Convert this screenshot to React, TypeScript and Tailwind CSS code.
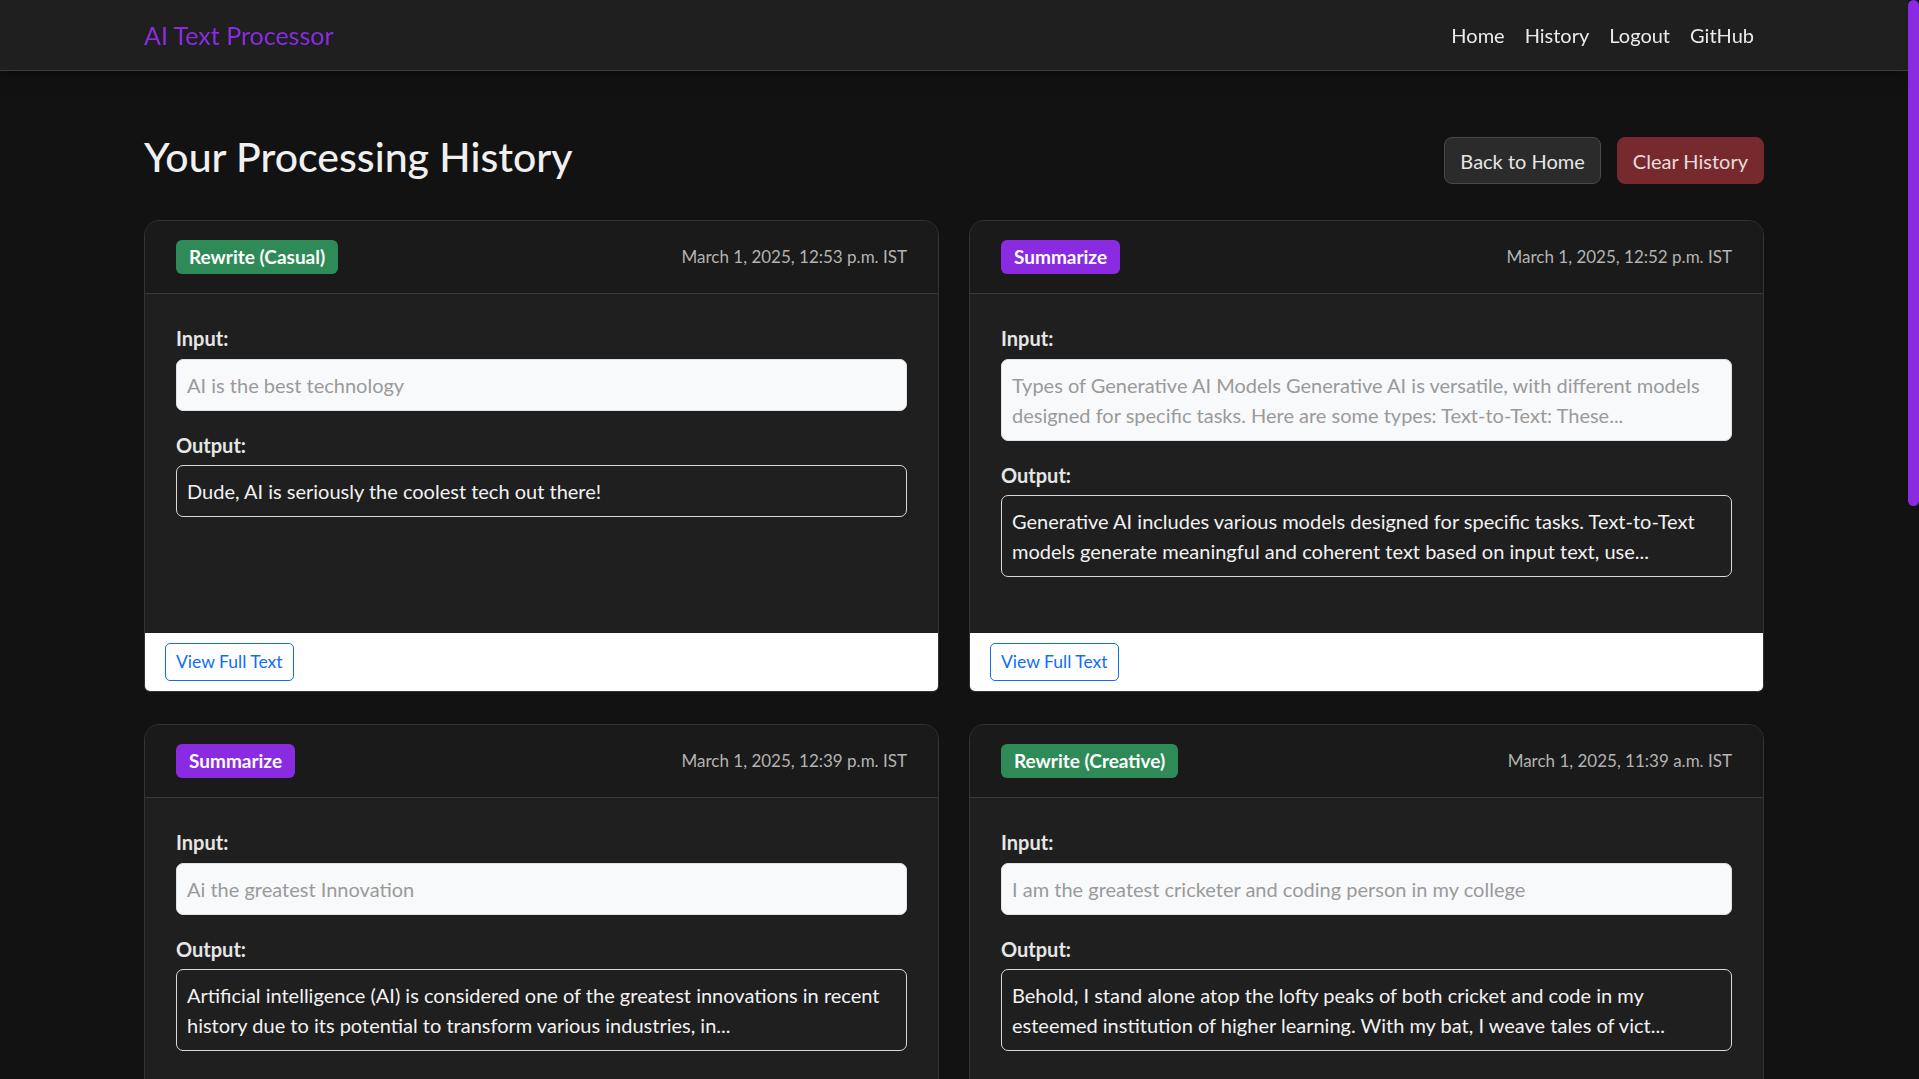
const navLinks = ["Home", "History", "Logout", "GitHub"];

type Entry = {
  type: string;
  kind: "rewrite" | "summarize";
  date: string;
  input: string;
  output: string;
};

const entries: Entry[] = [
  {
    type: "Rewrite (Casual)",
    kind: "rewrite",
    date: "March 1, 2025, 12:53 p.m. IST",
    input: "AI is the best technology",
    output: "Dude, AI is seriously the coolest tech out there!",
  },
  {
    type: "Summarize",
    kind: "summarize",
    date: "March 1, 2025, 12:52 p.m. IST",
    input:
      "Types of Generative AI Models Generative AI is versatile, with different models designed for specific tasks. Here are some types: Text-to-Text: These...",
    output:
      "Generative AI includes various models designed for specific tasks. Text-to-Text models generate meaningful and coherent text based on input text, use...",
  },
  {
    type: "Summarize",
    kind: "summarize",
    date: "March 1, 2025, 12:39 p.m. IST",
    input: "Ai the greatest Innovation",
    output:
      "Artificial intelligence (AI) is considered one of the greatest innovations in recent history due to its potential to transform various industries, in...",
  },
  {
    type: "Rewrite (Creative)",
    kind: "rewrite",
    date: "March 1, 2025, 11:39 a.m. IST",
    input: "I am the greatest cricketer and coding person in my college",
    output:
      "Behold, I stand alone atop the lofty peaks of both cricket and code in my esteemed institution of higher learning. With my bat, I weave tales of vict...",
  },
  {
    type: "Rewrite (Formal)",
    kind: "rewrite",
    date: "March 1, 2025, 11:20 a.m. IST",
    input: "hey can u send me the notes from class",
    output:
      "Good afternoon, would you kindly share the notes from today's lecture at your earliest convenience? I would greatly appreciate it.",
  },
  {
    type: "Summarize",
    kind: "summarize",
    date: "March 1, 2025, 11:05 a.m. IST",
    input: "Machine learning is a subset of artificial intelligence",
    output:
      "Machine learning is a branch of AI that enables systems to learn from data and improve their performance without being explicitly programmed...",
  },
  {
    type: "Summarize",
    kind: "summarize",
    date: "February 28, 2025, 9:47 p.m. IST",
    input: "Cloud computing basics",
    output:
      "Cloud computing delivers computing services such as storage, servers and databases over the internet, offering flexible resources and scale...",
  },
  {
    type: "Rewrite (Casual)",
    kind: "rewrite",
    date: "February 28, 2025, 9:30 p.m. IST",
    input: "The meeting has been rescheduled to Monday",
    output:
      "Heads up, the meeting got moved to Monday, so no stress about it today. Catch you then and we can go over everything.",
  },
];

function HistoryCard({ entry }: { entry: Entry }) {
  const badge = entry.kind === "rewrite" ? "bg-[#2e8b57]" : "bg-[#8a2be2]";
  return (
    <div className="flex flex-col rounded-b-[6px] rounded-t-[15px] border border-[#333333] bg-[#1f1f1f]">
      <div className="flex items-center justify-between rounded-t-[14px] border-b border-[#3a3a3a] bg-[#1a1a1a] px-[31px] py-[19px]">
        <span className={`rounded-[6px] px-[13px] py-[8px] text-[19px] font-bold leading-[18px] text-white ${badge}`}>
          {entry.type}
        </span>
        <span className="text-[17px] leading-[26px] text-[#b3b3b3]">{entry.date}</span>
      </div>

      <div className="flex-1 px-[31px] pb-[56px] pt-[29px]">
        <div className="mb-[6px] font-bold text-[#e6e6e6]">Input:</div>
        <div className="mb-[19px] rounded-[7px] border border-[#dee2e6] bg-[#f8f9fa] p-[10px] text-[#9a9a9a]">
          {entry.input}
        </div>
        <div className="mb-[5px] font-bold text-[#e6e6e6]">Output:</div>
        <div className="rounded-[7px] border border-[#d9d9d9] p-[10px] text-[#f2f2f2]">{entry.output}</div>
      </div>

      <div className="rounded-b-[5px] bg-white px-[20px] py-[10px]">
        <button
          type="button"
          className="rounded-[5px] border border-[#0d6efd] px-[10px] py-[5px] text-[17.5px] leading-[26px] text-[#0d6efd]"
        >
          View Full Text
        </button>
      </div>
    </div>
  );
}

export default function App() {
  return (
    <div className="flex h-screen bg-[#121212] font-['Lato',sans-serif] text-[20px] leading-[30px] text-[#e6e6e6]">
      <div className="flex-1 overflow-y-auto [scrollbar-width:none]">
        <nav className="sticky top-0 z-10 border-b border-[#3d3d3d] bg-[#1f1f1f] shadow-[0_2px_14px_rgba(0,0,0,0.6)]">
          <div className="mx-auto flex h-[70px] max-w-[1620px] items-center justify-between">
            <a href="#" className="text-[25px] leading-[37px] text-[#8a2be2]">
              AI Text Processor
            </a>
            <div className="flex">
              {navLinks.map((link) => (
                <a key={link} href="#" className="px-[10px] text-[#ebebeb]">
                  {link}
                </a>
              ))}
            </div>
          </div>
        </nav>

        <main className="mx-auto max-w-[1620px] pb-[40px] pt-[62px]">
          <div className="mb-[39px] flex h-[48px] items-center justify-between">
            <h2 className="text-[41px] font-medium leading-[48px] text-[#f0f0f0]">Your Processing History</h2>
            <div className="mt-[7px] flex gap-4">
              <button
                type="button"
                className="rounded-[8px] border border-[#4a4a4a] bg-[#2b2b2b] px-[15px] py-[7.5px] text-[#e6e6e6]"
              >
                Back to Home
              </button>
              <button
                type="button"
                className="rounded-[8px] border border-[#772a2e] bg-[#772a2e] px-[15px] py-[7.5px] text-[#eadcdc]"
              >
                Clear History
              </button>
            </div>
          </div>

          <div className="grid grid-cols-2 gap-x-[30px] gap-y-[32px]">
            {entries.map((entry, i) => (
              <HistoryCard key={i} entry={entry} />
            ))}
          </div>
        </main>
      </div>

      {/* scroll rail, the thumb sits at the top of the page */}
      <div className="w-[11px] shrink-0">
        <div className="h-[506px] rounded-full bg-[#8a2be2]" />
      </div>
    </div>
  );
}
